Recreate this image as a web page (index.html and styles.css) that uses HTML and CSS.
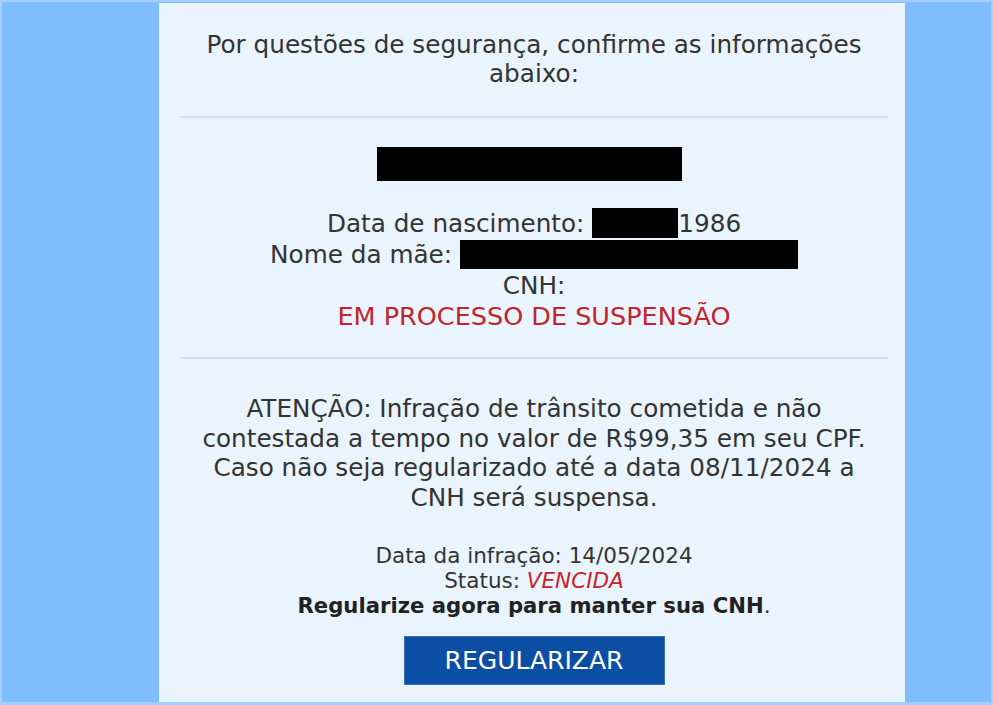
FILE: index.html
```html
<!DOCTYPE html>
<html lang="pt-BR">
<head>
<meta charset="utf-8">
<title>Confirme as informações</title>
<link rel="stylesheet" href="styles.css">
</head>
<body>
<div class="frame">
  <main class="panel">
    <p class="intro">Por questões de segurança, confirme as informações abaixo:</p>
    <hr class="rule">
    <div class="redact redact-name"></div>
    <div class="info">
      <p>Data de nascimento: <span class="redact redact-date"></span>1986</p>
      <p>Nome da mãe: <span class="redact redact-mother"></span></p>
      <p>CNH:</p>
      <p class="alert">EM PROCESSO DE SUSPENSÃO</p>
    </div>
    <hr class="rule">
    <p class="notice">ATENÇÃO: Infração de trânsito cometida e não contestada a tempo no valor de R$99,35 em seu CPF. Caso não seja regularizado até a data 08/11/2024 a CNH será suspensa.</p>
    <div class="details">
      <p>Data da infração: 14/05/2024</p>
      <p>Status: <em class="status">VENCIDA</em></p>
      <p><strong>Regularize agora para manter sua CNH</strong>.</p>
    </div>
    <a class="btn" href="#">REGULARIZAR</a>
  </main>
</div>
</body>
</html>
```

FILE: styles.css
```css
* { box-sizing: border-box; }
html, body { margin: 0; padding: 0; }
body {
  background: #80bdff;
  font-family: "DejaVu Sans", Verdana, sans-serif;
  color: #333;
}
.frame {
  width: 993px;
  height: 705px;
  border: 2px solid #a3ceff;
  border-bottom-width: 3px;
  padding: 1px 0 0 157px;
  background: #80bdff;
}
.panel {
  width: 746px;
  height: 699px;
  background: #eaf4fe;
  padding: 27px 17px 0 21px;
  display: flex;
  flex-direction: column;
  align-items: center;
  text-align: center;
}
.panel p { margin: 0; }
.intro {
  font-size: 24.7px;
  line-height: 29px;
  width: 690px;
}
.rule {
  width: 708px;
  border: 0;
  border-top: 2px solid #d7dee6;
  margin: 28px 0 29px;
}
.redact { background: #000; }
.redact-name { width: 305px; height: 34px; margin-right: 10px; }
.info {
  margin-top: 27px;
  font-size: 24.7px;
  line-height: 31px;
}
.redact-date {
  display: inline-block;
  width: 86px;
  height: 30px;
  vertical-align: -6px;
}
.redact-mother {
  display: inline-block;
  width: 338px;
  height: 29px;
  vertical-align: -6px;
}
.alert { color: #c4232b; font-size: 25.5px; }
.info + .rule { margin: 25px 0 35px; }
.notice {
  font-size: 24.7px;
  line-height: 29.5px;
  width: 690px;
}
.details {
  margin-top: 31px;
  font-size: 21.5px;
  line-height: 25px;
}
.status { color: #c8232c; }
.details strong { color: #222; font-size: 21.2px; }
.btn {
  margin-top: 18px;
  width: 261px;
  height: 49px;
  display: flex;
  align-items: center;
  justify-content: center;
  background: #0c4ea4;
  border: 1px solid #3a70b8;
  color: #fff;
  font-size: 25px;
  text-decoration: none;
}
```
